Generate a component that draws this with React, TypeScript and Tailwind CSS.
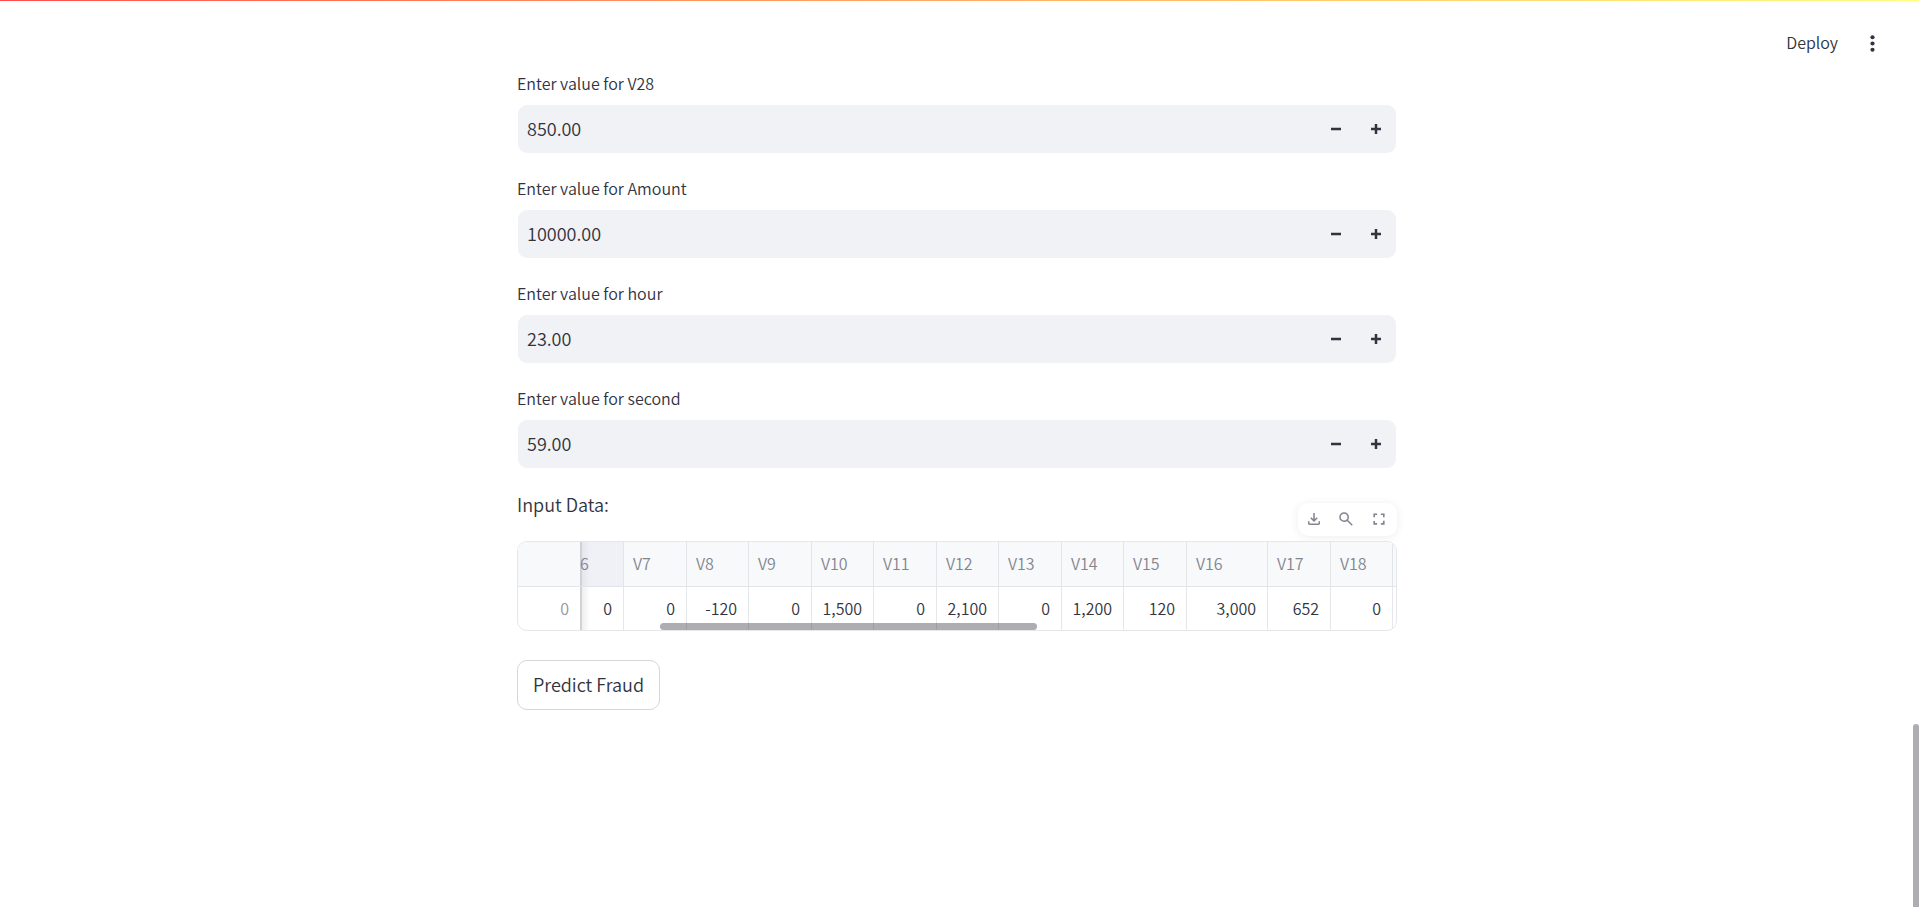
import { useState } from "react";

const fields = [
  { name: "V28", initial: "850.00" },
  { name: "Amount", initial: "10000.00" },
  { name: "hour", initial: "23.00" },
  { name: "second", initial: "59.00" },
];

const columns = [
  { label: "V7", value: "0", width: "w-[63px]" },
  { label: "V8", value: "-120", width: "w-[62px]" },
  { label: "V9", value: "0", width: "w-[63px]" },
  { label: "V10", value: "1,500", width: "w-[62px]" },
  { label: "V11", value: "0", width: "w-[63px]" },
  { label: "V12", value: "2,100", width: "w-[62px]" },
  { label: "V13", value: "0", width: "w-[63px]" },
  { label: "V14", value: "1,200", width: "w-[62px]" },
  { label: "V15", value: "120", width: "w-[63px]" },
  { label: "V16", value: "3,000", width: "w-[81px]" },
  { label: "V17", value: "652", width: "w-[63px]" },
  { label: "V18", value: "0", width: "w-[62px]" },
];

function NumberField({ name, initial }: { name: string; initial: string }) {
  const [value, setValue] = useState(initial);
  const step = (delta: number) => setValue((Number(value) + delta).toFixed(2));
  const id = `value-${name}`;
  return (
    <div>
      <label htmlFor={id} className="mb-[5px] block h-[30px] text-base leading-7">
        Enter value for {name}
      </label>
      <div className="flex h-[50px] overflow-hidden rounded-[10px] border border-transparent bg-[#f0f2f6] bg-clip-padding">
        <input
          id={id}
          type="text"
          inputMode="decimal"
          value={value}
          onChange={(e) => setValue(e.target.value)}
          className="min-w-0 flex-1 bg-transparent px-[9px] pb-0.5 text-lg outline-none"
        />
        <button
          type="button"
          aria-label={`Decrease ${name}`}
          onClick={() => step(-0.01)}
          className="flex w-10 items-center justify-center"
        >
          <svg viewBox="0 0 10 10" className="size-[10px]" fill="currentColor">
            <path d="M0 3.75h10v2.5H0z" />
          </svg>
        </button>
        <button
          type="button"
          aria-label={`Increase ${name}`}
          onClick={() => step(0.01)}
          className="flex w-10 items-center justify-center"
        >
          <svg viewBox="0 0 10 10" className="size-[10px]" fill="currentColor">
            <path d="M3.75 0h2.5v3.75H10v2.5H6.25V10h-2.5V6.25H0v-2.5h3.75z" />
          </svg>
        </button>
      </div>
    </div>
  );
}

function TableToolbar() {
  return (
    <div className="absolute right-0 bottom-full mb-[5px] flex h-[33px] w-[99px] items-center justify-around rounded-[10px] bg-white pr-0.5 pb-0.5 text-[#83858e] shadow-[0_1px_8px_rgba(49,51,63,0.09)]">
      <button type="button" aria-label="Download">
        <svg viewBox="0 0 24 24" className="size-[18px]" fill="currentColor">
          <path d="M12 16l-5-5 1.4-1.45 2.6 2.6V4h2v8.15l2.6-2.6L17 11zM6 20q-.825 0-1.412-.587T4 18v-3h2v3h12v-3h2v3q0 .825-.587 1.413T18 20z" />
        </svg>
      </button>
      <button type="button" aria-label="Search">
        <svg viewBox="0 0 24 24" className="size-[18px]" fill="currentColor">
          <path d="M19.6 21l-6.3-6.3q-.75.6-1.725.95T9.5 16q-2.725 0-4.612-1.888T3 9.5t1.888-4.612T9.5 3t4.613 1.888T16 9.5q0 1.1-.35 2.075T14.7 13.3l6.3 6.3zM9.5 14q1.875 0 3.188-1.312T14 9.5t-1.312-3.187T9.5 5 6.313 6.313 5 9.5t1.313 3.188T9.5 14" />
        </svg>
      </button>
      <button type="button" aria-label="Fullscreen">
        <svg viewBox="0 0 24 24" className="size-[18px]" fill="currentColor">
          <path d="M4.5 19.5v-5h2.2v2.8h2.8v2.2zm10 0v-2.2h2.8v-2.8h2.2v5zM4.5 9.5v-5h5v2.2H6.7v2.8zm12.8 0V6.7h-2.8V4.5h5v5z" />
        </svg>
      </button>
    </div>
  );
}

function DataTable() {
  return (
    <div className="relative mt-5">
      <TableToolbar />
      <div className="relative overflow-hidden rounded-[10px] border border-[#e6e7ea]">
        <table className="w-full table-fixed border-separate border-spacing-0 text-base leading-6">
          <thead className="text-left text-[#83858e]">
            <tr className="h-[45px] bg-[#f8f9fb] [&>th]:border-b [&>th]:border-[#e3e4e8] [&>th]:pb-0.5 [&>th]:font-[350]">
              <th className="w-[62px]" aria-label="Index" />
              <th className="w-[44px] border-r bg-[#f0f1f6] bg-linear-to-r from-[#cfd0d7] from-3% via-[#e6e7ed] via-6% to-[#f0f1f6] to-24%">
                6
              </th>
              {columns.map((c) => (
                <th key={c.label} className={`${c.width} border-r pl-[9px]`}>
                  {c.label}
                </th>
              ))}
              <th aria-label="V19" />
            </tr>
          </thead>
          <tbody className="text-right">
            <tr className="h-[43px] [&>td]:border-[#e6e7ea] [&>td]:pb-0.5">
              <td className="pr-[11px] text-[#94969d]">0</td>
              <td className="border-r bg-linear-to-r from-[#d0d0d2] from-3% via-[#f0f0f1] via-6% to-white to-24% pr-[11px]">
                0
              </td>
              {columns.map((c) => (
                <td key={c.label} className="border-r pr-[11px]">
                  {c.value}
                </td>
              ))}
              <td />
            </tr>
          </tbody>
        </table>
        <div className="absolute bottom-0 left-[142px] h-[7px] w-[377px] rounded-full bg-[#31333f]/40" />
      </div>
    </div>
  );
}

export default function App() {
  return (
    <div className="relative flex min-h-screen bg-white font-['Noto_Sans_CJK_SC','Noto_Sans',sans-serif] font-[350] text-[#31333f]">
      <div className="absolute inset-x-0 top-0 h-px bg-linear-to-r from-[#ff4b4b] to-[#fffd80]" />
      <header className="absolute top-[28px] right-[34px] flex h-[30px] items-center gap-[22px]">
        <button type="button" className="pb-0.5 text-base">
          Deploy
        </button>
        <button type="button" aria-label="Menu">
          <svg viewBox="0 0 24 24" className="size-[25px]" fill="currentColor">
            <circle cx="12" cy="6" r="2" />
            <circle cx="12" cy="12" r="2" />
            <circle cx="12" cy="18" r="2" />
          </svg>
        </button>
      </header>
      <main className="flex flex-1 justify-center pt-[69px] pr-[5px] pb-10">
        <div className="w-full max-w-[880px]">
          <div className="flex flex-col gap-5">
            {fields.map((f) => (
              <NumberField key={f.name} {...f} />
            ))}
            <p className="h-8 text-lg leading-[30px]">Input Data:</p>
          </div>
          <DataTable />
          <button
            type="button"
            className="mt-[29px] h-[50px] rounded-[10px] border border-[#d6d6d9] px-[15px] pb-0.5 text-lg"
          >
            Predict Fraud
          </button>
        </div>
      </main>
      <div className="absolute right-0 bottom-0 h-[183px] w-1.5 rounded-t-full bg-[#adadb2]" />
    </div>
  );
}
